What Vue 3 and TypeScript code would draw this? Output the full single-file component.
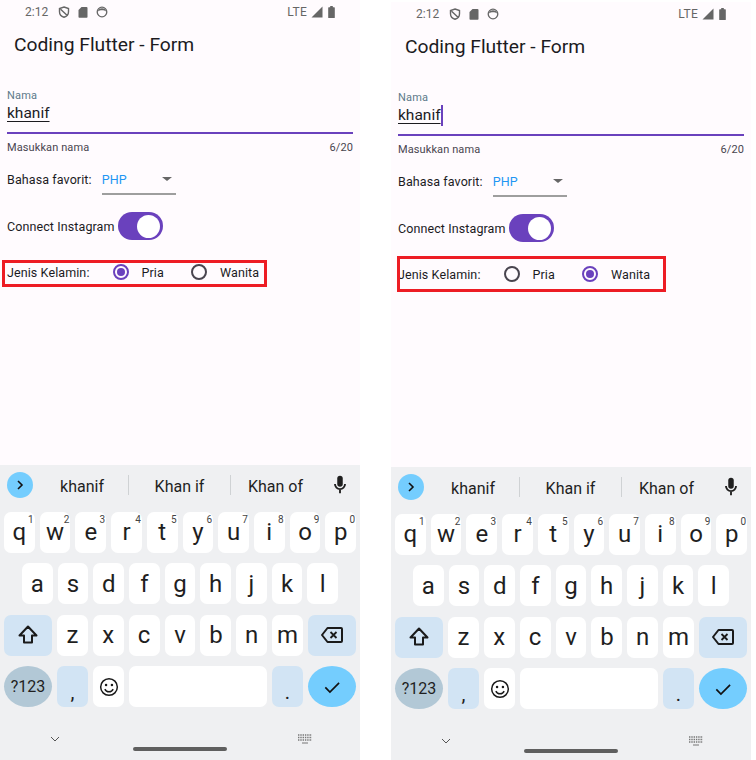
<script setup lang="ts">
interface PhoneState {
  id: string
  gender: 'Pria' | 'Wanita'
  showCaret: boolean
  boxStyle: { left: string; top: string; width: string; height: string }
}

interface KeyItem {
  label: string
  hint?: string
}

const phones: PhoneState[] = [
  {
    id: 'pria',
    gender: 'Pria',
    showCaret: false,
    boxStyle: { left: '2px', top: '260px', width: '265px', height: '27px' },
  },
  {
    id: 'wanita',
    gender: 'Wanita',
    showCaret: true,
    boxStyle: { left: '6px', top: '254px', width: '269px', height: '36px' },
  },
]

const genders = ['Pria', 'Wanita']
const suggestions = ['khanif', 'Khan if', 'Khan of']

const topRow: KeyItem[] = [
  { label: 'q', hint: '1' },
  { label: 'w', hint: '2' },
  { label: 'e', hint: '3' },
  { label: 'r', hint: '4' },
  { label: 't', hint: '5' },
  { label: 'y', hint: '6' },
  { label: 'u', hint: '7' },
  { label: 'i', hint: '8' },
  { label: 'o', hint: '9' },
  { label: 'p', hint: '0' },
]
const midRow = ['a', 's', 'd', 'f', 'g', 'h', 'j', 'k', 'l']
const lowRow = ['z', 'x', 'c', 'v', 'b', 'n', 'm']
</script>

<template>
  <main class="screens">
    <section v-for="phone in phones" :key="phone.id" class="phone">
      <header class="status">
        <span class="time">2:12</span>
        <svg class="st-icon" viewBox="0 0 12 12" width="12" height="12">
          <path d="M6 1l4.500 1.600v3.200c0 2.700-1.900 4.700-4.500 5.400-2.600-.7-4.500-2.700-4.500-5.400V2.600zM2.600 3.200L9 9.200" fill="none" stroke="#666" stroke-width="1.400" />
        </svg>
        <svg class="st-icon" viewBox="0 0 12 12" width="12" height="12">
          <path d="M4.500 1H9.500a1 1 0 0 1 1 1v9a.8.8 0 0 1-.8.8H2.300a.8.8 0 0 1-.8-.8V4z" fill="#666" />
        </svg>
        <svg class="st-icon" viewBox="0 0 12 12" width="12" height="12">
          <circle cx="6" cy="6" r="4.800" fill="none" stroke="#666" stroke-width="1.300" />
          <path d="M1.800 5.600a4.300 4.300 0 0 1 8.400 0C8 3.900 4 3.900 1.800 5.600z" fill="#666" />
        </svg>
        <span class="lte">LTE</span>
        <svg class="st-signal" viewBox="0 0 12 12" width="12" height="12">
          <path d="M.5 11.500L11.500.5v11z" fill="#666" />
        </svg>
        <svg class="st-battery" viewBox="0 0 7 12" width="7" height="12">
          <path d="M2.200 0h2.600v1.200h1.400a.6.6 0 0 1 .6.6v9.600a.6.6 0 0 1-.6.6H.8a.6.6 0 0 1-.6-.6V1.800a.6.6 0 0 1 .6-.6h1.400z" fill="#666" />
        </svg>
      </header>

      <h1 class="title">Coding Flutter - Form</h1>

      <form class="form" @submit.prevent>
        <div class="field-label">Nama</div>
        <div class="field-value">
          <span class="typed">khanif</span><i v-if="phone.showCaret" class="caret"></i>
        </div>
        <div class="field-line"></div>
        <div class="helper">
          <span>Masukkan nama</span>
          <span>6/20</span>
        </div>

        <div class="lang-row">
          <span>Bahasa favorit:</span>
          <div class="dropdown">
            <span class="dropdown-value">PHP</span>
            <i class="dropdown-arrow"></i>
          </div>
        </div>

        <div class="switch-row">
          <span>Connect Instagram</span>
          <span class="switch"><i class="thumb"></i></span>
        </div>

        <div class="radio-row">
          <span class="radio-title">Jenis Kelamin:</span>
          <div v-for="g in genders" :key="g" class="radio-item">
            <span class="radio" :class="{ 'is-on': phone.gender === g }"></span>
            <span>{{ g }}</span>
          </div>
        </div>
      </form>

      <div class="red-box" :style="phone.boxStyle"></div>

      <div class="keyboard">
        <div class="strip">
          <span class="strip-btn">
            <svg viewBox="0 0 12 12" width="12" height="12">
              <path d="M4 2l4 4-4 4" fill="none" stroke="#111" stroke-width="1.600" />
            </svg>
          </span>
          <div class="words">
            <span v-for="word in suggestions" :key="word" class="word">{{ word }}</span>
          </div>
          <svg class="mic" viewBox="0 0 24 24" width="22" height="22">
            <path d="M12 14a3 3 0 0 0 3-3V5a3 3 0 0 0-6 0v6a3 3 0 0 0 3 3z" fill="#1f1f1f" />
            <path d="M17.500 11a5.500 5.500 0 0 1-11 0M12 16.500V21" fill="none" stroke="#1f1f1f" stroke-width="2" />
          </svg>
        </div>

        <div class="row">
          <span v-for="k in topRow" :key="k.label" class="key">
            {{ k.label }}<sup class="hint">{{ k.hint }}</sup>
          </span>
        </div>
        <div class="row row-mid">
          <span v-for="k in midRow" :key="k" class="key">{{ k }}</span>
        </div>
        <div class="row">
          <span class="key key-wide key-fn">
            <svg viewBox="0 0 24 24" width="24" height="24">
              <path d="M12 3.500l8.500 9h-4.500v7H8v-7H3.500z" fill="none" stroke="#1a1a1a" stroke-width="2" stroke-linejoin="round" />
            </svg>
          </span>
          <span v-for="k in lowRow" :key="k" class="key">{{ k }}</span>
          <span class="key key-wide key-fn">
            <svg viewBox="0 0 24 24" width="24" height="24">
              <path d="M7.500 5H21a1 1 0 0 1 1 1v12a1 1 0 0 1-1 1H7.500L2 12z" fill="none" stroke="#1a1a1a" stroke-width="2" stroke-linejoin="round" />
              <path d="M10.500 9l6 6M16.500 9l-6 6" fill="none" stroke="#1a1a1a" stroke-width="1.800" />
            </svg>
          </span>
        </div>
        <div class="row">
          <span class="key key-wide key-sym">?123</span>
          <span class="key key-fn key-punct">,</span>
          <span class="key">
            <svg viewBox="0 0 24 24" width="20" height="20">
              <circle cx="12" cy="12" r="10" fill="none" stroke="#1a1a1a" stroke-width="1.800" />
              <circle cx="8.500" cy="9.500" r="1.500" fill="#1a1a1a" />
              <circle cx="15.500" cy="9.500" r="1.500" fill="#1a1a1a" />
              <path d="M7 14.500a5.500 5.500 0 0 0 10 0" fill="none" stroke="#1a1a1a" stroke-width="1.800" />
            </svg>
          </span>
          <span class="key key-space"></span>
          <span class="key key-fn key-punct">.</span>
          <span class="key key-wide key-enter">
            <svg viewBox="0 0 24 24" width="20" height="20">
              <path d="M4 12.500l5.500 5.500L20.500 7" fill="none" stroke="#111" stroke-width="2" />
            </svg>
          </span>
        </div>

        <div class="nav">
          <svg class="nav-chevron" viewBox="0 0 10 6" width="10" height="6">
            <path d="M1 1l4 4 4-4" fill="none" stroke="#555" stroke-width="1" />
          </svg>
          <svg class="nav-kbd" viewBox="0 0 14 10" width="14" height="10">
            <path d="M0 1h14M0 3.500h14M0 6h14" fill="none" stroke="#777" stroke-width="1.500" stroke-dasharray="1.400 .9" />
            <path d="M4 9h6" fill="none" stroke="#777" stroke-width="1" />
          </svg>
          <span class="nav-pill"></span>
        </div>
      </div>
    </section>
  </main>
</template>

<style scoped>
.screens {
  display: flex;
  gap: 31px;
  width: 756px;
  height: 760px;
  overflow: hidden;
  background: #fff;
  font-family: Roboto, "Liberation Sans", sans-serif;
  color: #1c1b1f;
}

.phone {
  position: relative;
  display: flex;
  flex: none;
  flex-direction: column;
  width: 360px;
  height: 760px;
  background: #fffbfe;
}

.phone + .phone {
  margin-top: 2px;
}

/* status bar */
.status {
  display: flex;
  align-items: center;
  gap: 7px;
  height: 24px;
  padding: 0 25px;
  color: #666;
  font-size: 12px;
}

.time {
  margin-right: 3px;
}

.lte {
  margin-left: auto;
  margin-right: -3px;
  letter-spacing: 0.3px;
}

.st-signal {
  margin-right: -2px;
}

/* app bar */
.title {
  margin: 0;
  padding: 9px 14px 0;
  height: 44px;
  box-sizing: border-box;
  font-size: 19.250px;
  font-weight: 400;
  line-height: 23px;
}

/* form */
.form {
  padding: 20px 7px 0;
  font-size: 12.500px;
  letter-spacing: 0.1px;
}

.field-label {
  height: 14px;
  color: #5d7a8a;
  font-size: 11px;
  line-height: 15px;
  letter-spacing: 0.2px;
}

.field-value {
  display: flex;
  align-items: center;
  height: 22px;
  font-size: 15.500px;
  letter-spacing: 0;
}

.typed {
  text-decoration: underline;
  text-decoration-thickness: 1px;
  text-underline-offset: 3px;
}

.caret {
  width: 2px;
  height: 21px;
  background: #6a41bd;
}

.field-line {
  height: 2px;
  margin-top: 8px;
  background: #6a41bd;
}

.helper {
  display: flex;
  justify-content: space-between;
  margin-top: 7px;
  color: #49454f;
  font-size: 11px;
  line-height: 14px;
  letter-spacing: 0.1px;
}

.lang-row {
  display: flex;
  align-items: baseline;
  gap: 10px;
  margin-top: 17px;
}

.dropdown {
  position: relative;
  width: 74px;
  height: 23px;
  border-bottom: 2px solid #9e9e9e;
  box-sizing: border-box;
}

.dropdown-value {
  color: #2196f3;
  line-height: 14px;
}

.dropdown-arrow {
  position: absolute;
  top: 5px;
  right: 4px;
  border-top: 4px solid #666;
  border-left: 5px solid transparent;
  border-right: 5px solid transparent;
}

.switch-row {
  display: flex;
  align-items: center;
  gap: 3px;
  margin-top: 17px;
}

.switch {
  display: flex;
  align-items: center;
  justify-content: flex-end;
  width: 45px;
  height: 28px;
  padding-right: 2.500px;
  box-sizing: border-box;
  border-radius: 14px;
  background: #6a41bd;
}

.thumb {
  width: 23px;
  height: 23px;
  border-radius: 50%;
  background: #fff;
}

.radio-row {
  display: flex;
  align-items: center;
  height: 26px;
  margin-top: 19px;
}

.radio-title {
  width: 105.500px;
}

.radio-item {
  display: flex;
  align-items: center;
  gap: 13px;
  width: 78.500px;
}

.radio {
  position: relative;
  width: 16px;
  height: 16px;
  box-sizing: border-box;
  border: 2px solid #49454f;
  border-radius: 50%;
}

.radio.is-on {
  border-color: #6a41bd;
}

.radio.is-on::after {
  content: "";
  position: absolute;
  inset: 2px;
  border-radius: 50%;
  background: #6a41bd;
}

/* annotation drawn over the screenshot */
.red-box {
  position: absolute;
  box-sizing: border-box;
  border: 3px solid #ed1c24;
  pointer-events: none;
}

/* keyboard */
.keyboard {
  position: absolute;
  inset: 465px 0 0;
  display: flex;
  flex-direction: column;
  gap: 10.500px;
  padding: 0 4px;
  background: #eff0f2;
}

.strip {
  display: flex;
  flex: none;
  align-items: center;
  height: 40px;
  padding: 0 5px 0 3px;
  margin-bottom: -4px;
}

.strip-btn {
  display: flex;
  flex: none;
  align-items: center;
  justify-content: center;
  width: 26px;
  height: 26px;
  border-radius: 50%;
  background: #74cdfe;
}

.words {
  display: grid;
  flex: none;
  grid-template-columns: 92px 102px 90px;
  margin-left: 3px;
  margin-right: auto;
}

.word {
  height: 20px;
  border-left: 1px solid #cfd2d4;
  color: #1f1f1f;
  font-size: 16px;
  line-height: 23px;
  text-align: center;
}

.word:first-child {
  border-left: 0;
}

.mic {
  flex: none;
}

.row {
  display: flex;
  flex: none;
  gap: 5px;
  height: 41px;
}

.row-mid {
  padding: 0 18px;
}

.key {
  position: relative;
  display: flex;
  flex: 1 1 0;
  align-items: center;
  justify-content: center;
  border-radius: 7px;
  background: #fff;
  color: #1f1f1f;
  font-size: 24px;
}

.hint {
  position: absolute;
  top: 2px;
  right: 1px;
  color: #444;
  font-size: 10px;
  line-height: 12px;
}

.key-wide {
  flex: 0 0 48px;
}

.key-fn {
  background: #d2e4f4;
}

.key-punct {
  padding-top: 10px;
  box-sizing: border-box;
  font-size: 20px;
}

.key-space {
  flex: 0 0 138px;
}

.key-sym {
  border-radius: 50%;
  background: #b2c8d6;
  font-size: 16px;
}

.key-enter {
  border-radius: 50%;
  background: #74cdfe;
}

/* gesture bar */
.nav {
  position: relative;
  flex: 1;
  margin-top: -10.500px;
}

.nav-chevron {
  position: absolute;
  left: 46px;
  top: 29px;
}

.nav-kbd {
  position: absolute;
  left: 294px;
  top: 27px;
}

.nav-pill {
  position: absolute;
  left: 129px;
  top: 40px;
  width: 94px;
  height: 4px;
  border-radius: 2px;
  background: #5f5f5f;
}
</style>

<style>
html,
body {
  overflow: hidden;
}
</style>
